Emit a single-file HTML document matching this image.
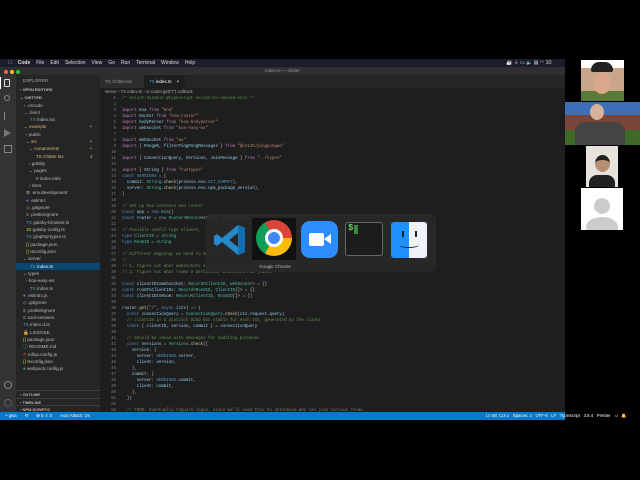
<!DOCTYPE html>
<html><head><meta charset="utf-8"><style>
*{margin:0;padding:0;box-sizing:border-box}
body{width:640px;height:480px;background:#000;position:relative;overflow:hidden;font-family:"Liberation Sans",sans-serif}
.a{position:absolute}
#menu{left:0;top:59px;width:565px;height:8px;background:#1b1d2b;color:#ddd;font-size:5px;line-height:8px;white-space:nowrap}
#menu span{margin-left:6px}
#title{left:0;top:67px;width:565px;height:8px;background:#2f2f2f;color:#999;font-size:4.5px;line-height:8px;text-align:center}
#act{left:0;top:75px;width:16px;height:337px;background:#333}
#side{left:16px;top:75px;width:84px;height:337px;background:#252526;color:#bbb;font-size:4.6px}
#side div{position:absolute;white-space:nowrap;height:7.3px;line-height:7.3px}
#tabs{left:100px;top:75px;width:465px;height:13px;background:#252526}
#crumb{left:100px;top:88px;width:465px;height:7px;background:#1e1e1e;color:#aaa;font-size:4.3px;line-height:7px;padding-left:5px}
#ed{left:100px;top:95px;width:465px;height:317px;background:#1e1e1e}
#code{left:100px;top:96px;font-family:"Liberation Mono",monospace;font-size:4.1px;line-height:6px;color:#c8c8c8;white-space:pre;opacity:.92}
.n{display:inline-block;width:16px;text-align:right;color:#858585;margin-right:6px}
.k{color:#c586c0}.b{color:#569cd6}.s{color:#ce9178}.c{color:#6a9955}.v{color:#9cdcfe}.t{color:#4ec9b0}.f{color:#dcdcaa}
#status{left:0;top:412px;width:565px;height:8px;background:#007acc;color:#fff;font-size:4.3px;line-height:8px;white-space:nowrap}
#dock{left:206px;top:214px;width:230px;height:58px;background:rgba(40,40,40,.9);border-radius:5px}
.tile{position:absolute}
</style></head><body>
<div class="a" id="menu"><span style="margin-left:8px">&#63743;</span><span><b>Code</b></span><span>File</span><span>Edit</span><span>Selection</span><span>View</span><span>Go</span><span>Run</span><span>Terminal</span><span>Window</span><span>Help</span>
<span style="position:absolute;left:500px;color:#ddd">☕ ⏚ ▭ 🔈 ▤ ◠ 10:</span></div>
<div class="a" id="title">index.ts — chitter
<div class="a" style="left:4px;top:2.5px;width:4px;height:4px;border-radius:50%;background:#fe5f57"></div>
<div class="a" style="left:10px;top:2.5px;width:4px;height:4px;border-radius:50%;background:#febc2e"></div>
<div class="a" style="left:16px;top:2.5px;width:4px;height:4px;border-radius:50%;background:#28c840"></div></div>
<div class="a" id="act">
<div class="a" style="left:0;top:2px;width:1px;height:12px;background:#fff"></div>
<div class="a" style="left:4px;top:4px;width:6px;height:8px;border:1px solid #ddd;border-radius:1px"></div>
<div class="a" style="left:4px;top:20px;width:6px;height:6px;border:1px solid #888;border-radius:50%"></div>
<div class="a" style="left:4px;top:37px;width:7px;height:8px;border-left:1px solid #888"></div>
<div class="a" style="left:4px;top:54px;width:0;height:0;border-left:7px solid #777;border-top:4px solid transparent;border-bottom:4px solid transparent"></div>
<div class="a" style="left:4px;top:70px;width:8px;height:8px;border:1px solid #888"></div>
<div class="a" style="left:4px;top:306px;width:8px;height:8px;border:1px solid #888;border-radius:50%"></div>
<div class="a" style="left:4px;top:324px;width:8px;height:8px;border:1.5px dotted #888;border-radius:50%"></div>
</div>
<div class="a" id="side">
<div style="left:7px;top:2px;color:#aaa">EXPLORER</div>
<div style="left:4px;top:11px;font-weight:bold;font-size:4px">› OPEN EDITORS</div>
<div style="left:4px;top:19px;font-weight:bold;font-size:4px">⌄ CHITTER</div>
<div style="left:8px;top:26.5px">› .vscode</div>
<div style="left:8px;top:33.5px">⌄ client</div>
<div style="left:14px;top:41px"><span style="color:#519aba">TS</span> index.tsx</div>
<div style="left:8px;top:48px;color:#d7ba7d">⌄ example</div>
<div style="left:74px;top:48px;color:#d7ba7d">•</div>
<div style="left:10px;top:55.5px">› public</div>
<div style="left:10px;top:63px;color:#d7ba7d">⌄ src</div>
<div style="left:74px;top:63px;color:#d7ba7d">•</div>
<div style="left:13px;top:70px;color:#d7ba7d">⌄ components</div>
<div style="left:74px;top:70px;color:#d7ba7d">•</div>
<div style="left:20px;top:77.5px;color:#d7ba7d">TS Chitter.tsx</div>
<div style="left:74px;top:77.5px;color:#d7ba7d">2</div>
<div style="left:13px;top:85px">› gatsby</div>
<div style="left:13px;top:92px">⌄ pages</div>
<div style="left:20px;top:99.5px"># index.mdx</div>
<div style="left:13px;top:107px">› sites</div>
<div style="left:10px;top:114px">⚙ .env.development</div>
<div style="left:10px;top:121.5px"><span style="color:#8a6fc6">●</span> .eslintrc</div>
<div style="left:10px;top:129px">◇ .gitignore</div>
<div style="left:10px;top:136px">≡ .prettierignore</div>
<div style="left:10px;top:143.5px"><span style="color:#519aba">TS</span> gatsby-browser.ts</div>
<div style="left:10px;top:151px"><span style="color:#cbcb41">JS</span> gatsby-config.ts</div>
<div style="left:10px;top:158px"><span style="color:#519aba">TS</span> graphql-types.ts</div>
<div style="left:10px;top:165.5px"><span style="color:#cbcb41">{}</span> package.json</div>
<div style="left:10px;top:173px"><span style="color:#cbcb41">{}</span> tsconfig.json</div>
<div style="left:7px;top:180px">⌄ server</div>
<div style="left:0;top:187.5px;width:84px;background:#094771;padding-left:14px;color:#fff"><span style="color:#519aba">TS</span> index.ts</div>
<div style="left:7px;top:195px">⌄ types</div>
<div style="left:10px;top:202px">› koa-easy-ws</div>
<div style="left:14px;top:209.5px"><span style="color:#519aba">TS</span> index.ts</div>
<div style="left:7px;top:217px"><span style="color:#8a6fc6">●</span> .eslintrc.js</div>
<div style="left:7px;top:224px">◇ .gitignore</div>
<div style="left:7px;top:231.5px">≡ .prettierignore</div>
<div style="left:7px;top:239px">≡ .tool-versions</div>
<div style="left:7px;top:246px"><span style="color:#519aba">TS</span> index.d.ts</div>
<div style="left:7px;top:253.5px"><span style="color:#cbcb41">🔒</span> LICENSE</div>
<div style="left:7px;top:261px"><span style="color:#cbcb41">{}</span> package.json</div>
<div style="left:7px;top:268px"><span style="color:#519aba">ⓘ</span> README.md</div>
<div style="left:7px;top:275.5px"><span style="color:#e44">®</span> rollup.config.js</div>
<div style="left:7px;top:283px"><span style="color:#cbcb41">{}</span> tsconfig.json</div>
<div style="left:7px;top:290px"><span style="color:#519aba">●</span> webpack.config.js</div>
<div style="left:0;top:315px;width:84px;border-top:1px solid #3c3c3c;padding-left:4px;font-weight:bold;font-size:4px">› OUTLINE</div>
<div style="left:0;top:322.5px;width:84px;border-top:1px solid #3c3c3c;padding-left:4px;font-weight:bold;font-size:4px">› TIMELINE</div>
<div style="left:0;top:330px;width:84px;border-top:1px solid #3c3c3c;padding-left:4px;font-weight:bold;font-size:4px">› NPM SCRIPTS</div>
</div>
<div class="a" id="tabs">
<div class="a" style="left:0;top:0;width:44px;height:13px;background:#2d2d2d;color:#999;font-size:4.5px;line-height:13px;padding-left:5px">TS Chitter.tsx</div>
<div class="a" style="left:44px;top:0;width:41px;height:13px;background:#1e1e1e;color:#fff;font-size:4.5px;line-height:13px;padding-left:5px"><span style="color:#519aba">TS</span> index.ts &nbsp;&nbsp; ×</div>
</div>
<div class="a" id="crumb">server › TS index.ts › ⊙ router.get("/") callback</div>
<div class="a" id="ed"></div>
<div class="a" id="code"><span class="n">1</span><span class="c">/* eslint-disable @typescript-eslint/no-unused-vars */</span>
<span class="n">2</span>
<span class="n">3</span><span class="k">import</span> <span class="v">Koa</span> <span class="k">from</span> <span class="s">"koa"</span>
<span class="n">4</span><span class="k">import</span> <span class="v">Router</span> <span class="k">from</span> <span class="s">"koa-router"</span>
<span class="n">5</span><span class="k">import</span> <span class="v">bodyParser</span> <span class="k">from</span> <span class="s">"koa-bodyparser"</span>
<span class="n">6</span><span class="k">import</span> <span class="v">websocket</span> <span class="k">from</span> <span class="s">"koa-easy-ws"</span>
<span class="n">7</span>
<span class="n">8</span><span class="k">import</span> <span class="v">WebSocket</span> <span class="k">from</span> <span class="s">"ws"</span>
<span class="n">9</span><span class="k">import</span> { <span class="v">PongWS</span>, <span class="v">filterPingPongMessages</span> } <span class="k">from</span> <span class="s">"@cs125/pingpongws"</span>
<span class="n">10</span>
<span class="n">11</span><span class="k">import</span> { <span class="v">ConnectionQuery</span>, <span class="v">Versions</span>, <span class="v">JoinMessage</span> } <span class="k">from</span> <span class="s">"../types"</span>
<span class="n">12</span>
<span class="n">13</span><span class="k">import</span> { <span class="v">String</span> } <span class="k">from</span> <span class="s">"runtypes"</span>
<span class="n">14</span><span class="b">const</span> <span class="b">VERSIONS</span> = {
<span class="n">15</span>  <span class="v">commit</span>: <span class="t">String</span>.<span class="f">check</span>(<span class="v">process</span>.<span class="v">env</span>.<span class="b">GIT_COMMIT</span>),
<span class="n">16</span>  <span class="v">server</span>: <span class="t">String</span>.<span class="f">check</span>(<span class="v">process</span>.<span class="v">env</span>.<span class="v">npm_package_version</span>),
<span class="n">17</span>}
<span class="n">18</span>
<span class="n">19</span><span class="c">// Set up Koa instance and router</span>
<span class="n">20</span><span class="b">const</span> <span class="v">app</span> = <span class="b">new</span> <span class="t">Koa</span>()
<span class="n">21</span><span class="b">const</span> <span class="v">router</span> = <span class="b">new</span> <span class="t">Router</span>&lt;<span class="t">Record</span>&lt;string, unknown&gt;&gt;()
<span class="n">22</span>
<span class="n">23</span><span class="c">// Possible useful type aliases, ...</span>
<span class="n">24</span><span class="b">type</span> <span class="t">ClientID</span> = <span class="t">string</span>
<span class="n">25</span><span class="b">type</span> <span class="t">RoomID</span> = <span class="t">string</span>
<span class="n">26</span>
<span class="n">27</span><span class="c">// Different mappings we need to maintain</span>
<span class="n">28</span><span class="c">//</span>
<span class="n">29</span><span class="c">// 1. Figure out what websockets a client is connected to</span>
<span class="n">30</span><span class="c">// 2. Figure out what rooms a particular websocket has joined</span>
<span class="n">31</span>
<span class="n">32</span><span class="b">const</span> <span class="v">clientIDtoWebsocket</span>: <span class="t">Record</span>&lt;<span class="t">ClientID</span>, <span class="t">WebSocket</span>&gt; = {}
<span class="n">33</span><span class="b">const</span> <span class="v">roomToClientIDs</span>: <span class="t">Record</span>&lt;<span class="t">RoomID</span>, <span class="t">ClientID</span>[]&gt; = {}
<span class="n">34</span><span class="b">const</span> <span class="v">clientIDtoRoom</span>: <span class="t">Record</span>&lt;<span class="t">ClientID</span>, <span class="t">RoomID</span>[]&gt; = {}
<span class="n">35</span>
<span class="n">36</span><span class="v">router</span>.<span class="f">get</span>(<span class="s">"/"</span>, <span class="b">async</span> (<span class="v">ctx</span>) <span class="b">=&gt;</span> {
<span class="n">37</span>  <span class="b">const</span> <span class="v">connectionQuery</span> = <span class="t">ConnectionQuery</span>.<span class="f">check</span>(<span class="v">ctx</span>.<span class="v">request</span>.<span class="v">query</span>)
<span class="n">38</span>  <span class="c">// clientID is a distinct UUID but stable for each tab, generated by the client</span>
<span class="n">39</span>  <span class="b">const</span> { <span class="v">clientID</span>, <span class="v">version</span>, <span class="v">commit</span> } = <span class="v">connectionQuery</span>
<span class="n">40</span>
<span class="n">41</span>  <span class="c">// Should be saved with messages for auditing purposes</span>
<span class="n">42</span>  <span class="b">const</span> <span class="v">versions</span> = <span class="t">Versions</span>.<span class="f">check</span>({
<span class="n">43</span>    <span class="v">version</span>: {
<span class="n">44</span>      <span class="v">server</span>: <span class="b">VERSIONS</span>.<span class="v">server</span>,
<span class="n">45</span>      <span class="v">client</span>: <span class="v">version</span>,
<span class="n">46</span>    },
<span class="n">47</span>    <span class="v">commit</span>: {
<span class="n">48</span>      <span class="v">server</span>: <span class="b">VERSIONS</span>.<span class="v">commit</span>,
<span class="n">49</span>      <span class="v">client</span>: <span class="v">commit</span>,
<span class="n">50</span>    },
<span class="n">51</span>  })
<span class="n">52</span>
<span class="n">53</span>  <span class="c">// TODO: eventually require login, since we'll need this to determine who can join various rooms.</span></div>
<div class="a" id="status"><span style="margin-left:5px">⑂ gwa</span><span style="margin-left:8px">⟲</span><span style="margin-left:8px">⊗ 0 ⚠ 0</span><span style="margin-left:8px">Auto Attach: On</span>
<span class="a" style="left:486px;top:0">Ln 58, Col 1 &nbsp; Spaces: 2 &nbsp; UTF-8 &nbsp; LF &nbsp; TypeScript &nbsp; 3.8.4 &nbsp; Prettier &nbsp; ☺ &nbsp;🔔</span></div>
<div class="a" id="dock">
<svg class="a" style="left:6px;top:8px" width="36" height="36" viewBox="0 0 36 36"><path d="M26 3 L33 6 V30 L26 33 L10 20 L5 24 L2 22 V14 L5 12 L10 16 Z M26 11 L17 18 L26 25 Z" fill="#2489ca"/><path d="M26 3 L33 6 V30 L26 33 Z" fill="#1070b3"/></svg>
<div class="a" style="left:46px;top:4px;width:44px;height:42px;background:#111;border-radius:2px"></div>
<div class="a" style="left:50px;top:6px;width:36px;height:36px;border-radius:50%;background:conic-gradient(from -30deg,#db4437 0 120deg,#fbbc05 120deg 240deg,#0f9d58 240deg 360deg)"></div>
<div class="a" style="left:59px;top:15px;width:18px;height:18px;border-radius:50%;background:#fff"></div>
<div class="a" style="left:62px;top:18px;width:12px;height:12px;border-radius:50%;background:#4285f4"></div>
<div class="a" style="left:44px;top:50px;width:50px;text-align:center;color:#bbb;font-size:4.5px">Google Chrome</div>
<div class="a" style="left:95px;top:7px;width:37px;height:37px;border-radius:9px;background:#2d8cff"></div>
<div class="a" style="left:103px;top:19px;width:15px;height:13px;border-radius:2px;background:#fff"></div>
<div class="a" style="left:118px;top:20px;width:0;height:0;border-right:7px solid #fff;border-top:5px solid transparent;border-bottom:5px solid transparent"></div>
<div class="a" style="left:139px;top:8px;width:38px;height:34px;border-radius:3px;background:#1c1c1c;border:1px solid #666"></div>
<div class="a" style="left:142px;top:9px;color:#5fd35f;font-family:'Liberation Mono',monospace;font-size:9px;font-weight:bold">$</div>
<div class="a" style="left:148px;top:11px;width:4px;height:9px;background:#3a8a3a"></div>
<div class="a" style="left:185px;top:8px;width:36px;height:36px;border-radius:3px;background:linear-gradient(90deg,#1e90ff 0 50%,#eef3fb 50% 100%)"></div>
<div class="a" style="left:196px;top:17px;width:2px;height:6px;background:#123"></div>
<div class="a" style="left:209px;top:17px;width:2px;height:6px;background:#123"></div>
<div class="a" style="left:193px;top:28px;width:20px;height:6px;border-bottom:1.5px solid #123;border-radius:0 0 50% 50%"></div>
</div>
<div class="tile" style="left:581px;top:60px;width:43px;height:41px;background:linear-gradient(#fff 0 20%,#c9a58a 20% 75%,#5a7a3a 75%)"><div class="a" style="left:10px;top:2px;width:22px;height:10px;background:#222;border-radius:8px 8px 2px 2px"></div><div class="a" style="left:12px;top:12px;width:18px;height:22px;border-radius:50%;background:#d9a88c"></div></div>
<div class="tile" style="left:565px;top:102px;width:75px;height:43px;background:linear-gradient(#3c6fb5 0 30%,#7a4438 30% 65%,#3f6a2a 65%)"><div class="a" style="left:25px;top:2px;width:14px;height:16px;border-radius:50%;background:#d7b29a"></div><div class="a" style="left:10px;top:20px;width:50px;height:23px;border-radius:10px 10px 0 0;background:#444"></div></div>
<div class="tile" style="left:586px;top:146px;width:32px;height:41px;background:#e6e2dc"><div class="a" style="left:9px;top:9px;width:15px;height:17px;border-radius:50%;background:#b98f74;border-top:5px solid #222"></div><div class="a" style="left:3px;top:29px;width:26px;height:12px;border-radius:8px 8px 0 0;background:#222"></div></div>
<div class="tile" style="left:581px;top:188px;width:42px;height:42px;background:#fff;overflow:hidden"><div class="a" style="left:13px;top:10px;width:16px;height:16px;border-radius:50%;background:#ccc"></div><div class="a" style="left:5px;top:29px;width:32px;height:20px;border-radius:50%;background:#ccc"></div></div>
</body></html>
